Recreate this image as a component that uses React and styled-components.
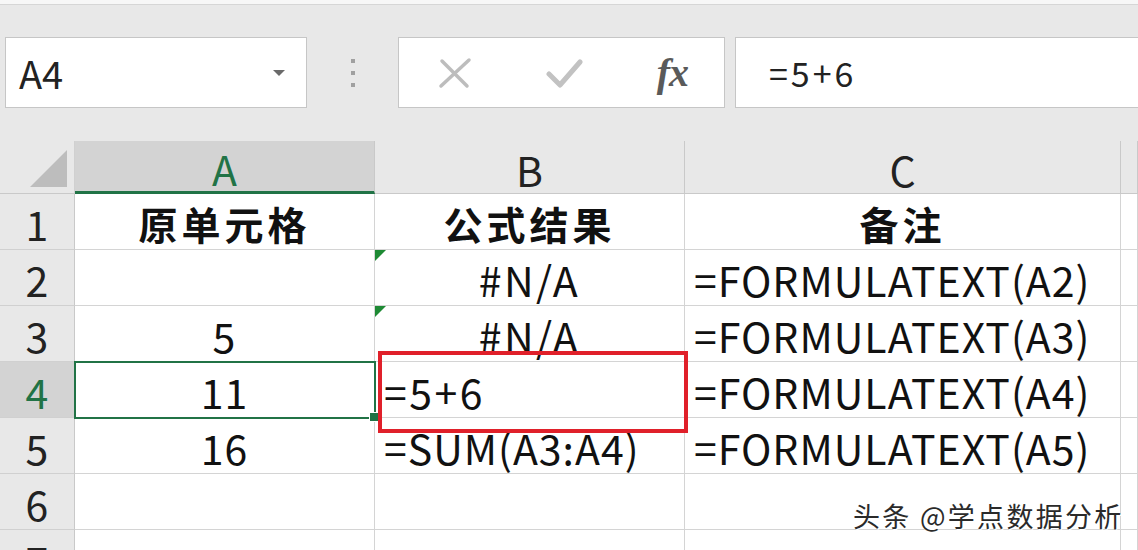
import React from "react";
import styled, { createGlobalStyle } from "styled-components";

const GlobalStyle = createGlobalStyle`
  html, body {
    margin: 0;
    padding: 0;
    background: #e8e8e8;
  }
  body {
    font-family: "Noto Sans CJK SC", "Noto Sans", sans-serif;
  }
`;

const Page = styled.div`
  position: relative;
  width: 1138px;
  height: 550px;
  overflow: hidden;
  background: #e8e8e8;
  display: flex;
  flex-direction: column;
  & > * {
    flex-shrink: 0;
  }
`;

const TopEdge = styled.div`
  height: 4px;
  background: #f7f7f7;
  border-bottom: 1px solid #d6d6d6;
`;

const FormulaBar = styled.div`
  display: flex;
  align-items: stretch;
  height: 71px;
  margin-top: 32px;
  padding-left: 5px;
`;

const Box = styled.div`
  background: #ffffff;
  border: 1px solid #c6c6c6;
  box-sizing: border-box;
  display: flex;
  align-items: center;
`;

const NameBox = styled(Box)`
  width: 302px;
  padding: 0 21px 0 13px;
  justify-content: space-between;
  font-size: 38px;
  color: #222;
`;

const Caret = styled.span`
  width: 0;
  height: 0;
  border-left: 6px solid transparent;
  border-right: 6px solid transparent;
  border-top: 6px solid #6a6a6a;
`;

const Grip = styled.div`
  width: 91px;
  display: flex;
  flex-direction: column;
  align-items: center;
  justify-content: center;
  gap: 8px;
`;

const GripDot = styled.span`
  width: 4px;
  height: 4px;
  background: #a0a0a0;
`;

const ButtonsBox = styled(Box)`
  width: 327px;
  justify-content: space-between;
  padding: 0 36px 0 38px;
`;

const FxText = styled.span`
  font-family: "Liberation Serif", "DejaVu Serif", serif;
  font-style: italic;
  font-weight: bold;
  font-size: 40px;
  color: #5a5a5a;
  letter-spacing: -1px;
`;

const InputBox = styled(Box)`
  flex: 1;
  margin-left: 10px;
  margin-right: -2px;
  padding-left: 33px;
  font-size: 34px;
  letter-spacing: 3px;
  color: #222;
`;

const Sheet = styled.div`
  margin-top: 33px;
  display: grid;
  grid-template-columns: 75px 300px 310px 436px 1fr;
  grid-template-rows: 53px repeat(7, 56px);
  background: #ffffff;
`;

const Corner = styled.div`
  background: #e8e8e8;
  display: flex;
  align-items: flex-end;
  justify-content: flex-end;
  padding: 0 7px 6px 0;
  border-bottom: 1px solid #c9c9c9;
  border-right: 1px solid #d0d0d0;
`;

const ColHead = styled.div`
  background: ${({ active }) => (active ? "#d3d3d3" : "#e8e8e8")};
  color: ${({ active }) => (active ? "#217346" : "#222")};
  border-right: 1px solid #c9c9c9;
  border-bottom: ${({ active }) => (active ? "3px solid #217346" : "1px solid #c9c9c9")};
  display: flex;
  align-items: center;
  justify-content: center;
  font-size: 41px;
  padding-top: 4px;
  box-sizing: border-box;
`;

const RowHead = styled.div`
  background: ${({ active }) => (active ? "#d3d3d3" : "#e8e8e8")};
  color: ${({ active }) => (active ? "#217346" : "#222")};
  border-right: 1px solid #c9c9c9;
  border-bottom: 1px solid #d0d0d0;
  display: flex;
  align-items: center;
  justify-content: center;
  font-size: 41px;
  padding-top: 3px;
  box-sizing: border-box;
`;

const Cell = styled.div`
  position: relative;
  border-right: 1px solid #d4d4d4;
  border-bottom: 1px solid #d4d4d4;
  display: flex;
  align-items: center;
  justify-content: ${({ align }) => (align === "left" ? "flex-start" : "center")};
  padding-left: ${({ align }) => (align === "left" ? "9px" : "0")};
  padding-top: 3px;
  font-size: ${({ bold }) => (bold ? "39px" : "41px")};
  letter-spacing: ${({ bold, wide }) => (bold ? "4px" : wide ? "2.5px" : "1px")};
  font-weight: ${({ bold }) => (bold ? 700 : 400)};
  color: #111;
  white-space: nowrap;
  box-sizing: border-box;
  ${({ selected }) =>
    selected &&
    `
    outline: 2px solid #217346;
    outline-offset: -1px;
    z-index: 2;
  `}
`;

const ErrorFlag = styled.span`
  position: absolute;
  left: 0;
  top: 0;
  width: 0;
  height: 0;
  border-top: 11px solid #1e8a34;
  border-right: 11px solid transparent;
`;

const FillHandle = styled.span`
  position: absolute;
  right: -5px;
  bottom: -5px;
  width: 8px;
  height: 8px;
  background: #217346;
  border: 1px solid #fff;
`;

const Highlight = styled.div`
  position: absolute;
  left: 378px;
  top: 351px;
  width: 310px;
  height: 82px;
  border: 4px solid #e0202a;
  box-sizing: border-box;
  z-index: 5;
  pointer-events: none;
`;

const Watermark = styled.div`
  position: absolute;
  left: 853px;
  top: 496px;
  font-size: 27px;
  color: #2a2a2a;
  letter-spacing: 2.3px;
  text-shadow: 1px 1px 0 #fff, -1px -1px 0 #fff;
  z-index: 6;
`;

const rows = [
  { n: 1, a: "原单元格", b: "公式结果", c: "备注", header: true },
  { n: 2, a: "", b: "#N/A", c: "=FORMULATEXT(A2)", flag: true },
  { n: 3, a: "5", b: "#N/A", c: "=FORMULATEXT(A3)", flag: true },
  { n: 4, a: "11", b: "=5+6", c: "=FORMULATEXT(A4)", bLeft: true, active: true },
  { n: 5, a: "16", b: "=SUM(A3:A4)", c: "=FORMULATEXT(A5)", bLeft: true },
  { n: 6, a: "", b: "", c: "" },
  { n: 7, a: "", b: "", c: "" },
];

export default function App() {
  return (
    <>
      <GlobalStyle />
      <Page>
        <TopEdge />
        <FormulaBar>
          <NameBox>
            <span>A4</span>
            <Caret />
          </NameBox>
          <Grip>
            <GripDot />
            <GripDot />
            <GripDot />
          </Grip>
          <ButtonsBox>
            <svg width="36" height="34" viewBox="0 0 36 34">
              <path d="M4 30 L32 4 M5 5 L30 30" stroke="#bdbdbd" strokeWidth="3.5" strokeLinecap="round" fill="none" />
            </svg>
            <svg width="38" height="34" viewBox="0 0 38 34">
              <path d="M3 18 L14 29 L34 6" stroke="#c2c2c2" strokeWidth="5" strokeLinecap="round" strokeLinejoin="round" fill="none" />
            </svg>
            <FxText>fx</FxText>
          </ButtonsBox>
          <InputBox>=5+6</InputBox>
        </FormulaBar>
        <Sheet>
          <Corner>
            <svg width="37" height="37" viewBox="0 0 37 37">
              <polygon points="37,0 37,37 0,37" fill="#bdbdbd" />
            </svg>
          </Corner>
          <ColHead active>A</ColHead>
          <ColHead>B</ColHead>
          <ColHead>C</ColHead>
          <ColHead />
          {rows.map((r) => (
            <React.Fragment key={r.n}>
              <RowHead active={r.active}>{r.n}</RowHead>
              <Cell bold={r.header} selected={r.active}>
                {r.a}
                {r.active && <FillHandle />}
              </Cell>
              <Cell bold={r.header} wide={r.flag || r.n === 4} align={r.bLeft ? "left" : "center"}>
                {r.flag && <ErrorFlag />}
                {r.b}
              </Cell>
              <Cell bold={r.header} align={r.header ? "center" : "left"}>
                {r.c}
              </Cell>
              <Cell />
            </React.Fragment>
          ))}
        </Sheet>
        <Highlight />
        <Watermark>头条 @学点数据分析</Watermark>
      </Page>
    </>
  );
}
